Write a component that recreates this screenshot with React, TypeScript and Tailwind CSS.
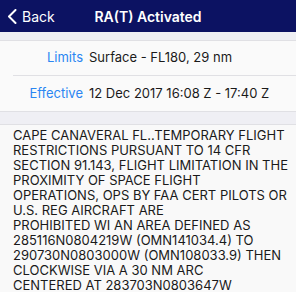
import React from 'react';

const notam = [
  'CAPE CANAVERAL FL..TEMPORARY FLIGHT',
  'RESTRICTIONS PURSUANT TO 14 CFR',
  'SECTION 91.143, FLIGHT LIMITATION IN THE',
  'PROXIMITY OF SPACE FLIGHT',
  'OPERATIONS, OPS BY FAA CERT PILOTS OR',
  'U.S. REG AIRCRAFT ARE',
  'PROHIBITED WI AN AREA DEFINED AS',
  '285116N0804219W (OMN141034.4) TO',
  '290730N0803000W (OMN108033.9) THEN',
  'CLOCKWISE VIA A 30 NM ARC',
  'CENTERED AT 283703N0803647W',
];

function Row({ label, value, last }: { label: string; value: string; last?: boolean }) {
  return (
    <div className="flex pl-[13px]">
      <div className={`flex flex-1 items-center h-[35px] ${last ? '' : 'border-b border-[#e0e0e4]'}`}>
        <span className="w-[76px] text-right text-[#2b86f2] pr-[6px]">{label}</span>
        <span className="text-[#1a1a1a]">{value}</span>
      </div>
    </div>
  );
}

export default function App() {
  return (
    <div className="w-[296px] h-[292px] overflow-hidden bg-[#efeff4] text-[13px] font-['Inter','Liberation_Sans',sans-serif]">
      {/* Nav bar */}
      <div className="relative flex items-center h-[32px] bg-[#0c1262] text-white">
        <div className="flex items-center pl-[7px] gap-[5px]">
          <svg width="10" height="15" viewBox="0 0 10 15" fill="none">
            <path d="M8.5 1 L2 7.5 L8.5 14" stroke="white" strokeWidth="2" strokeLinecap="round" strokeLinejoin="round" />
          </svg>
          <span className="text-[14px]">Back</span>
        </div>
        <span className="absolute left-0 right-0 text-center text-[14px] font-semibold pointer-events-none">RA(T) Activated</span>
      </div>

      {/* Details */}
      <div className="mt-[8px] bg-[#fafafa] border-y border-[#e0e0e4]">
        <Row label="Limits" value="Surface - FL180, 29 nm" />
        <Row label="Effective" value="12 Dec 2017 16:08 Z - 17:40 Z" last />
      </div>

      {/* NOTAM text */}
      <div className="mt-[12px] bg-[#f9f9f9] border-t border-[#e0e0e4] px-[13px] pt-[3px] leading-[15px] text-[#1a1a1a]">
        {notam.map((l) => (
          <div key={l} className="whitespace-nowrap">{l}</div>
        ))}
      </div>
    </div>
  );
}
